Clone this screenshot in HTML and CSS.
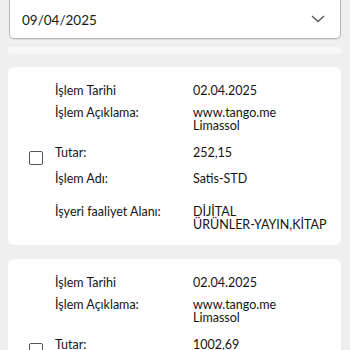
FILE: index.html
```html
<!DOCTYPE html>
<html lang="tr">
<head>
<meta charset="utf-8">
<link rel="stylesheet" href="styles.css">
</head>
<body>
<div class="page">
  <div class="select">
    <span class="select-value">09/04/2025</span>
    <svg class="chevron" width="14" height="8" viewBox="0 0 14 8"><path d="M1 1 L7 6.5 L13 1" fill="none" stroke="#555" stroke-width="1.3"/></svg>
  </div>
  <div class="strip"></div>

  <div class="card">
    <div class="check-col"><span class="checkbox"></span></div>
    <div class="rows">
      <div class="row r1"><span class="label">İşlem Tarihi</span><span class="value">02.04.2025</span></div>
      <div class="row r2"><span class="label">İşlem Açıklama:</span><span class="value">www.tango.me<br>Limassol</span></div>
      <div class="row r3"><span class="label">Tutar:</span><span class="value">252,15</span></div>
      <div class="row r4"><span class="label">İşlem Adı:</span><span class="value">Satis-STD</span></div>
      <div class="row r5"><span class="label">İşyeri faaliyet Alanı:</span><span class="value">DİJİTAL<br>ÜRÜNLER-YAYIN,KİTAP</span></div>
    </div>
  </div>

  <div class="card">
    <div class="check-col"><span class="checkbox"></span></div>
    <div class="rows">
      <div class="row r1"><span class="label">İşlem Tarihi</span><span class="value">02.04.2025</span></div>
      <div class="row r2"><span class="label">İşlem Açıklama:</span><span class="value">www.tango.me<br>Limassol</span></div>
      <div class="row r3"><span class="label">Tutar:</span><span class="value">1002,69</span></div>
      <div class="row r4"><span class="label">İşlem Adı:</span><span class="value">Satis-STD</span></div>
      <div class="row r5"><span class="label">İşyeri faaliyet Alanı:</span><span class="value">DİJİTAL<br>ÜRÜNLER-YAYIN,KİTAP</span></div>
    </div>
  </div>
</div>
</body>
</html>
```
FILE: styles.css
```css
html, body {
  margin: 0;
  padding: 0;
  background: #efefef;
}
body {
  font-family: Lato, "Noto Sans", sans-serif;
  color: #141414;
  width: 350px;
  height: 350px;
  overflow: hidden;
}
.page {
  display: flex;
  flex-direction: column;
}
.select {
  margin: -10px 9px 0 9px;
  height: 49px;
  box-sizing: border-box;
  background: #fff;
  border: 1px solid #b9b9b9;
  border-radius: 0 0 5px 5px;
  box-shadow: 0 1px 1px rgba(0,0,0,0.08);
  display: flex;
  align-items: center;
  justify-content: space-between;
  padding: 10px 15px 0 12px;
}
.select-value {
  font-size: 13.5px;
  color: #1a1a1a;
}
.chevron {
  margin-top: -2px;
}
.strip {
  margin: 8px 8px 0 8px;
  height: 7px;
  background: #f7f7f7;
  border-radius: 4px;
}
.card {
  margin: 13px 9px 0 8px;
  background: #fff;
  border-radius: 6px;
  display: flex;
  align-items: center;
  padding: 17px 0 14px 0;
}
.card + .card {
  margin-top: 14px;
}
.check-col {
  width: 47px;
  display: flex;
  justify-content: flex-end;
}
.checkbox {
  width: 12px;
  height: 12px;
  border: 1.6px solid #555;
  border-radius: 2px;
  margin-right: 12px;
}
.rows {
  display: flex;
  flex-direction: column;
}
.row {
  display: flex;
  font-size: 12.5px;
  line-height: 13px;
}
.label {
  width: 138px;
}
.value {
  flex: 1;
}
.r2 { margin-top: 9px; }
.r3 { margin-top: 14px; }
.r4 { margin-top: 13px; }
.r5 { margin-top: 20px; }
```
